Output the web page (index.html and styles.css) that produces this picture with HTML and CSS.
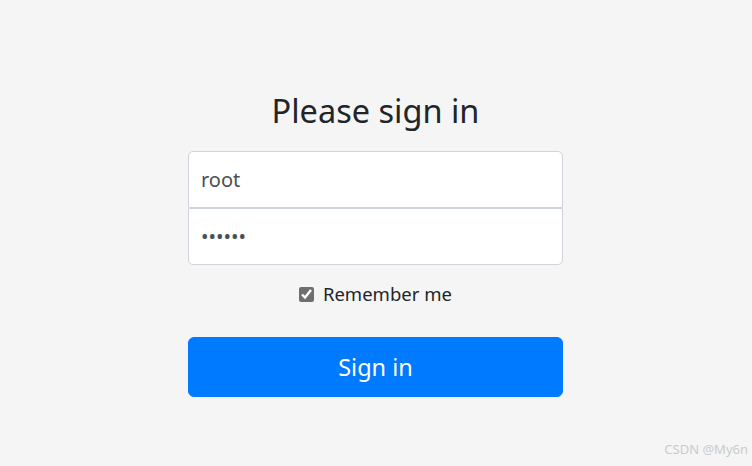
FILE: index.html
```html
<!DOCTYPE html>
<html lang="en">
<head>
  <meta charset="UTF-8">
  <meta name="viewport" content="width=device-width, initial-scale=1.0">
  <title>Signin</title>
  <link rel="stylesheet" href="styles.css">
</head>
<body>
  <form class="form-signin">
    <h1 class="signin-title">Please sign in</h1>

    <input type="text" class="form-control input-top" placeholder="Username" value="root">
    <input type="password" class="form-control input-bottom" placeholder="Password" value="123456">

    <div class="checkbox">
      <label>
        <input type="checkbox" checked> Remember me
      </label>
    </div>

    <button type="submit" class="btn-signin">Sign in</button>
  </form>

  <div class="watermark">CSDN @My6n</div>
</body>
</html>
```

FILE: styles.css
```css
html,
body {
  height: 100%;
}

body {
  margin: 0;
  display: flex;
  align-items: center;
  justify-content: center;
  background-color: #f5f5f5;
  font-family: "Noto Sans", "Open Sans", sans-serif;
  color: #212529;
}

.form-signin {
  width: 375px;
  padding-top: 22px;
  margin-left: -1px;
}

.signin-title {
  margin: 0 0 21px;
  font-size: 32.5px;
  font-weight: 400;
  line-height: 1.2;
  text-align: center;
}

.form-control {
  display: block;
  box-sizing: border-box;
  width: 100%;
  height: 57px;
  margin: 0;
  padding: 12px 12px;
  font-family: inherit;
  font-size: 20px;
  color: #495057;
  background-color: #fff;
  border: 1px solid #ced4da;
  border-radius: 5px;
  outline: none;
}

.input-top {
  border-bottom-left-radius: 0;
  border-bottom-right-radius: 0;
}

.input-bottom {
  margin-top: 0;
  border-top-left-radius: 0;
  border-top-right-radius: 0;
}

.checkbox {
  margin: 14px 0 29px;
  text-align: center;
  font-size: 18.5px;
  line-height: 1.6;
}

.checkbox input {
  width: 15px;
  height: 15px;
  margin: 0 4px 0 0;
  vertical-align: -1px;
  accent-color: #6f6f6f;
}

.btn-signin {
  display: block;
  width: 100%;
  height: 60px;
  padding: 0;
  font-family: inherit;
  font-size: 23.5px;
  color: #fff;
  background-color: #007bff;
  border: 1px solid #007bff;
  border-radius: 6px;
  cursor: pointer;
}

.watermark {
  position: absolute;
  right: 4px;
  bottom: 8px;
  font-size: 13px;
  color: #cbcbcb;
}
```
